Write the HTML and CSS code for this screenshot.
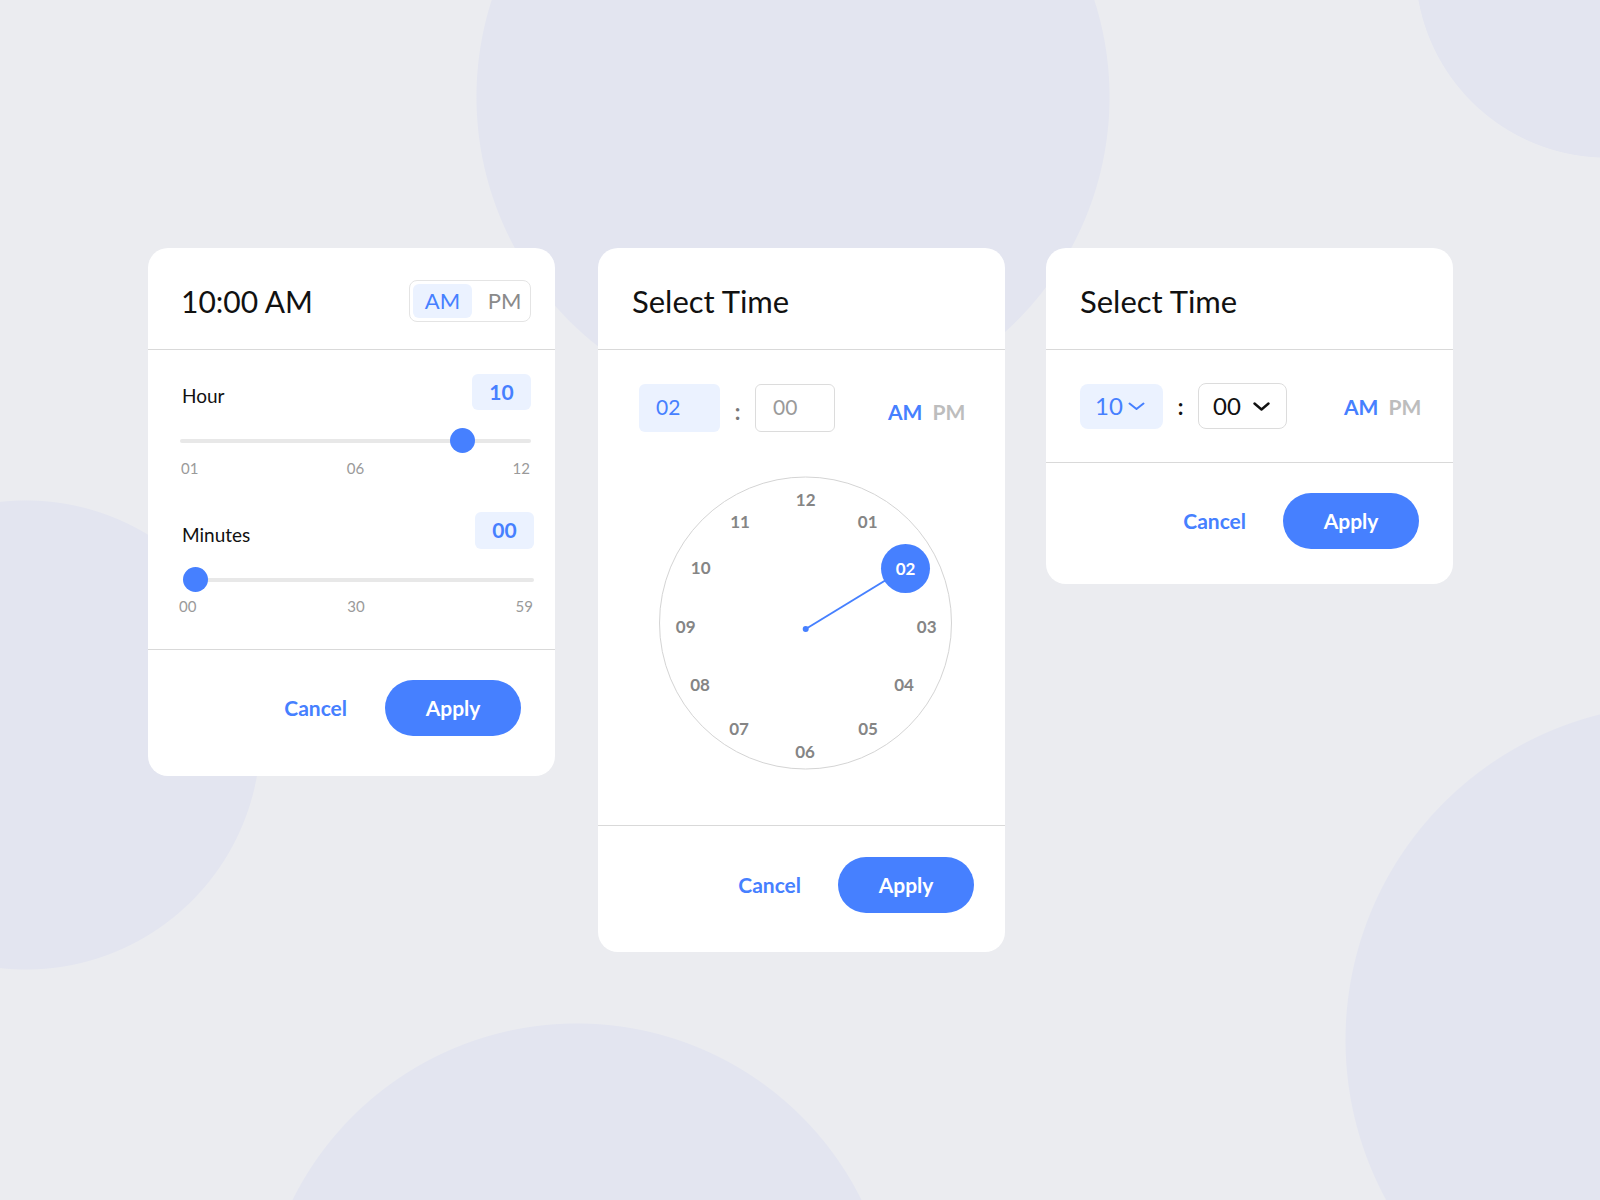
FILE: index.html
```html
<!DOCTYPE html>
<html lang="en">
<head>
<meta charset="utf-8">
<title>Time Pickers</title>
<link rel="stylesheet" href="styles.css">
</head>
<body>
<main class="stage">

  <section class="card card-slider">
    <header class="card-head">
      <h1 class="title title-time">10:00 AM</h1>
      <div class="toggle">
        <span class="toggle-opt is-active">AM</span>
        <span class="toggle-opt toggle-pm">PM</span>
      </div>
    </header>
    <div class="slider-body">
      <div class="field">
        <div class="field-row">
          <span class="field-label">Hour</span>
          <span class="value-box">10</span>
        </div>
        <div class="slider">
          <div class="track"></div>
          <div class="thumb" style="left: calc((100% - 25px) * 0.828)"></div>
        </div>
        <div class="ticks"><span>01</span><span>06</span><span>12</span></div>
      </div>
      <div class="field field-min">
        <div class="field-row">
          <span class="field-label">Minutes</span>
          <span class="value-box">00</span>
        </div>
        <div class="slider slider-min">
          <div class="track"></div>
          <div class="thumb" style="left: calc((100% - 25px) * 0)"></div>
        </div>
        <div class="ticks ticks-min"><span>00</span><span>30</span><span>59</span></div>
      </div>
    </div>
    <footer class="card-foot">
      <button class="btn-text">Cancel</button>
      <button class="btn-primary">Apply</button>
    </footer>
  </section>

  <section class="card card-clock">
    <header class="card-head">
      <h1 class="title">Select Time</h1>
    </header>
    <div class="clock-body">
      <div class="input-row">
        <span class="in-box in-active">02</span>
        <span class="colon">:</span>
        <span class="in-box in-plain">00</span>
        <span class="ampm"><span class="am">AM</span><span class="pm">PM</span></span>
      </div>
      <svg class="clock" width="407" height="330" viewBox="0 0 407 330" xmlns="http://www.w3.org/2000/svg">
        <circle cx="207.5" cy="163" r="146" fill="#fff" stroke="#d4d4d4" stroke-width="1"/>
        <line x1="207.7" y1="169" x2="288" y2="120" stroke="#4680ff" stroke-width="2"/>
        <circle cx="207.7" cy="169" r="3" fill="#4680ff"/>
        <circle cx="307.5" cy="108.5" r="24.5" fill="#4680ff"/>
        <g class="clock-num">
          <text x="207.7" y="39">12</text>
          <text x="269.7" y="61">01</text>
          <text x="328.7" y="166.7">03</text>
          <text x="306" y="224">04</text>
          <text x="270" y="268">05</text>
          <text x="207" y="291">06</text>
          <text x="141" y="268">07</text>
          <text x="102" y="224">08</text>
          <text x="87.7" y="166.7">09</text>
          <text x="102.7" y="107.7">10</text>
          <text x="142" y="61">11</text>
        </g>
        <text class="clock-sel" x="307.5" y="108.5">02</text>
      </svg>
    </div>
    <footer class="card-foot foot-clock">
      <button class="btn-text">Cancel</button>
      <button class="btn-primary">Apply</button>
    </footer>
  </section>

  <section class="card card-select">
    <header class="card-head">
      <h1 class="title">Select Time</h1>
    </header>
    <div class="select-body">
      <span class="sel-box sel-active">10
        <svg class="chev" width="17" height="9" viewBox="0 0 17 9"><path d="M1.5 1.5 L8.5 7 L15.5 1.5" fill="none" stroke="#4680ff" stroke-width="2" stroke-linecap="round" stroke-linejoin="round"/></svg>
      </span>
      <span class="colon colon-dark">:</span>
      <span class="sel-box sel-plain">00
        <svg class="chev" width="17" height="9" viewBox="0 0 17 9"><path d="M1.5 1.5 L8.5 7.5 L15.5 1.5" fill="none" stroke="#111" stroke-width="2.4" stroke-linecap="round" stroke-linejoin="round"/></svg>
      </span>
      <span class="ampm ampm-sel"><span class="am">AM</span><span class="pm">PM</span></span>
    </div>
    <footer class="card-foot foot-select">
      <button class="btn-text">Cancel</button>
      <button class="btn-primary">Apply</button>
    </footer>
  </section>

</main>
</body>
</html>
```

FILE: styles.css
```css
* { box-sizing: border-box; }

html, body {
  margin: 0;
  padding: 0;
}

body {
  width: 1600px;
  height: 1200px;
  overflow: hidden;
  font-family: "Lato", "Open Sans", sans-serif;
  color: #111;
  background-color: #ebecf0;
  background-image:
    radial-gradient(circle 317px at 793px 97px, #e3e5f0 99.7%, rgba(227,229,240,0) 100%),
    radial-gradient(circle 192px at 1607px -34px, #e3e5f0 99.6%, rgba(227,229,240,0) 100%),
    radial-gradient(circle 235px at 26px 735px, #e3e5f0 99.6%, rgba(227,229,240,0) 100%),
    radial-gradient(circle 318px at 577px 1341px, #e3e5f0 99.7%, rgba(227,229,240,0) 100%),
    radial-gradient(circle 336px at 1681px 1040px, #e3e5f0 99.7%, rgba(227,229,240,0) 100%);
  background-repeat: no-repeat;
}

.stage {
  display: flex;
  align-items: flex-start;
  padding: 248px 0 0 148px;
  gap: 42px;
}

.card {
  width: 407px;
  background: #fff;
  border-radius: 20px;
  overflow: hidden;
}
.card-clock {
  margin-left: 1px;
  margin-right: -1px;
}

.card-head {
  height: 102px;
  border-bottom: 1px solid #d9d9d9;
  display: flex;
  align-items: center;
  justify-content: space-between;
  padding: 4px 24px 0 34px;
}

.title {
  margin: 0;
  font-size: 31px;
  font-weight: 400;
  line-height: 40px;
  color: #111;
}
.title-time {
  font-size: 30px;
  margin-left: -1px;
}

/* AM / PM toggle */
.toggle {
  width: 122px;
  height: 42px;
  border: 1px solid #e4e4e4;
  border-radius: 8px;
  padding: 3px;
  display: flex;
}
.toggle-opt {
  height: 34px;
  display: flex;
  align-items: center;
  justify-content: center;
  font-size: 22px;
  color: #8a8a8a;
}
.toggle-opt.is-active {
  width: 59px;
  background: #ebf2ff;
  border-radius: 6px;
  color: #4680ff;
}
.toggle-pm {
  flex: 1;
  padding-left: 10px;
}

/* Slider card */
.slider-body {
  padding: 24px 24px 0 32px;
  height: 299px;
}
.field-row {
  height: 36px;
  display: flex;
  align-items: center;
  justify-content: space-between;
}
.field-label {
  font-size: 19px;
  padding-top: 7px;
  padding-left: 2px;
  color: #111;
}
.value-box {
  width: 59px;
  height: 36px;
  border-radius: 6px;
  background: #ebf2ff;
  color: #4680ff;
  font-size: 21px;
  font-weight: 700;
  display: flex;
  align-items: center;
  justify-content: center;
  padding-bottom: 2px;
}
.slider {
  position: relative;
  height: 25px;
  margin-top: 18px;
}
.track {
  position: absolute;
  left: 0;
  right: 0;
  top: 10.5px;
  height: 4px;
  border-radius: 2px;
  background: #e8e8e8;
}
.thumb {
  position: absolute;
  top: 0;
  width: 25px;
  height: 25px;
  border-radius: 50%;
  background: #4680ff;
}
.ticks {
  display: flex;
  justify-content: space-between;
  margin-top: 6px;
  font-size: 15px;
  line-height: 18px;
  color: #9a9a9a;
}
.ticks span:first-child { padding-left: 1px; }
.ticks span:last-child { padding-right: 1px; }

.field-min { margin-top: 35px; }
.field-min .field-row { height: 37px; }
.field-min .value-box { height: 37px; margin-right: -3px; }
.slider-min { margin-top: 18px; margin-left: 3px; margin-right: -3px; }
.ticks-min { margin-top: 5px; margin-left: -2px; margin-right: -3px; }

/* Footer */
.card-foot {
  border-top: 1px solid #d9d9d9;
  height: 127px;
  display: flex;
  justify-content: flex-end;
  align-items: flex-start;
  gap: 38px;
  padding: 30px 34px 0 0;
}
.btn-text, .btn-primary {
  font-family: inherit;
  border: 0;
  margin: 0;
  cursor: pointer;
  font-size: 21px;
  font-weight: 700;
}
.btn-text {
  background: none;
  color: #4680ff;
  padding: 0;
  height: 56px;
  line-height: 56px;
}
.btn-primary {
  width: 136px;
  height: 56px;
  border-radius: 28px;
  background: #4680ff;
  color: #fff;
  padding: 0 0 2px;
}

/* Clock card */
.clock-body {
  height: 475px;
  padding-top: 34px;
}
.input-row {
  display: flex;
  align-items: center;
  padding-left: 41px;
  height: 48px;
}
.in-box {
  height: 48px;
  border-radius: 6px;
  font-size: 21px;
  display: flex;
  align-items: center;
  padding-left: 17px;
  padding-bottom: 3px;
}
.in-active {
  width: 81px;
  background: #ebf2ff;
  color: #4680ff;
}
.in-plain {
  width: 80px;
  border: 1px solid #dcdcdc;
  color: #9a9a9a;
}
.colon {
  width: 35px;
  text-align: center;
  font-size: 22px;
  font-weight: 700;
  color: #777;
  padding-top: 6px;
}
.ampm {
  display: flex;
  gap: 10px;
  margin-left: 53px;
  padding-top: 7px;
  font-size: 21px;
  font-weight: 700;
}
.am { color: #4680ff; }
.pm { color: #bdbdbd; }

.clock {
  display: block;
  margin-top: 28px;
}
.clock-num text, .clock-sel {
  font-family: "Lato", "Open Sans", sans-serif;
  font-size: 17px;
  font-weight: 700;
  text-anchor: middle;
  dominant-baseline: central;
}
.clock-num text { fill: #858585; }
.clock-sel { fill: #fff; }

.foot-clock {
  height: 127px;
  padding: 31px 31px 0 0;
  gap: 37px;
}

/* Select card */
.select-body {
  height: 112px;
  display: flex;
  align-items: center;
  padding-left: 34px;
}
.sel-box {
  display: flex;
  align-items: center;
  justify-content: space-between;
  border-radius: 8px;
  font-size: 24px;
  padding-bottom: 2px;
}
.sel-active {
  width: 83px;
  height: 45px;
  background: #ebf2ff;
  color: #4680ff;
  padding-left: 15px;
  padding-right: 18px;
}
.sel-plain {
  width: 89px;
  height: 46px;
  border: 1px solid #dcdcdc;
  color: #111;
  padding-left: 14px;
  padding-right: 16px;
}
.chev { display: block; margin-top: 3px; }
.colon-dark { color: #111; font-size: 22px; padding-top: 0; }
.ampm-sel { margin-left: 57px; padding-top: 0; }

.foot-select {
  height: 122px;
  padding: 30px 34px 0 0;
  gap: 37px;
}
```
